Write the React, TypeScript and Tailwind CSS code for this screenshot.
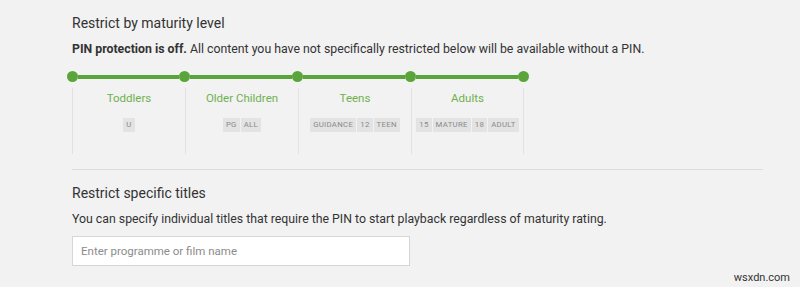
import React from "react";

const levels = [
  { name: "Toddlers", badges: ["U"] },
  { name: "Older Children", badges: ["PG", "ALL"] },
  { name: "Teens", badges: ["GUIDANCE", "12", "TEEN"] },
  { name: "Adults", badges: ["15", "MATURE", "18", "ADULT"] },
];

function Dot() {
  return <div className="w-[11px] h-[11px] rounded-full bg-[#5aa53a] shrink-0" />;
}

export default function App() {
  return (
    <div
      className="w-[800px] h-[287px] bg-[#f2f2f2] text-[#333] overflow-hidden relative"
      style={{ fontFamily: "Roboto, 'Noto Sans', sans-serif" }}
    >
      <div className="pl-[72px] pt-[13px] w-[763px]">
        <h2 className="text-[14px] leading-[20px] text-[#333] font-normal">Restrict by maturity level</h2>
        <p className="mt-[8px] text-[12.3px] leading-[16px] text-[#333]">
          <span className="font-bold">PIN protection is off.</span> All content you have not specifically restricted below will be available without a PIN.
        </p>
        <div className="mt-[14px] -ml-[5.5px] w-[462px] flex items-center">
          <Dot />
          <div className="flex-1 h-[4px] bg-[#5aa53a]" />
          <Dot />
          <div className="flex-1 h-[4px] bg-[#5aa53a]" />
          <Dot />
          <div className="flex-1 h-[4px] bg-[#5aa53a]" />
          <Dot />
          <div className="flex-1 h-[4px] bg-[#5aa53a]" />
          <Dot />
        </div>
        <div className="mt-[6px] grid grid-cols-4 w-[452px]">
          {levels.map((l, i) => (
            <div
              key={l.name}
              className={
                "h-[66px] border-l border-[#e2e2e2] flex flex-col items-center pt-[2px]" +
                (i === 3 ? " border-r" : "")
              }
            >
              <div className="text-[11.5px] leading-[16px] text-[#6fb150]">{l.name}</div>
              <div className="mt-[12px] flex gap-[1px]">
                {l.badges.map((b) => (
                  <span
                    key={b}
                    className="bg-[#e3e3e3] text-[#8a8a8a] text-[7.8px] leading-[14px] h-[14px] px-[3px] tracking-[0.3px]"
                  >
                    {b}
                  </span>
                ))}
              </div>
            </div>
          ))}
        </div>
        <div className="mt-[15px] h-px bg-[#dcdcdc]" />
        <h2 className="mt-[13px] text-[14px] leading-[20px] text-[#333] font-normal">Restrict specific titles</h2>
        <p className="mt-[8px] text-[12.3px] leading-[16px] text-[#333]">
          You can specify individual titles that require the PIN to start playback regardless of maturity rating.
        </p>
        <input
          className="mt-[9px] w-[338px] h-[30px] bg-white border border-[#d6d6d6] px-[8px] text-[11.5px] placeholder:text-[#8c8c8c] outline-none"
          placeholder="Enter programme or film name"
        />
      </div>
      <div className="absolute right-[10px] bottom-[2px] text-[11px] leading-[14px] text-[#333]">wsxdn.com</div>
    </div>
  );
}
